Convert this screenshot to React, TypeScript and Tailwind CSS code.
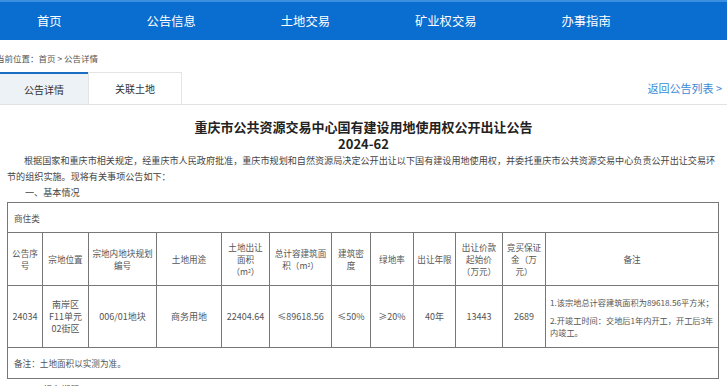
import React from "react";

const navItems = ["首页", "公告信息", "土地交易", "矿业权交易", "办事指南"];

// column widths in px, taken from the table grid
const colWidths = [35, 46, 68, 65, 48, 62, 39, 43, 42, 47, 43, 173];

const headers: React.ReactNode[] = [
    <>公告序<br />号</>,
    "宗地位置",
    <>宗地内地块规划<br />编号</>,
    "土地用途",
    <>土地出让<br />面积<br />（m<sup className="text-[5px]">2</sup>）</>,
    <>总计容建筑面<br />积（m<sup className="text-[5px]">2</sup>）</>,
    <>建筑密<br />度</>,
    "绿地率",
    "出让年限",
    <>出让价款<br />起始价<br />（万元）</>,
    <>竞买保证<br />金（万<br />元）</>,
    "备注",
];

const values: React.ReactNode[] = [
    "24034",
    <>南岸区<br />F11单元<br />02街区</>,
    "006/01地块",
    "商务用地",
    "22404.64",
    "≤89618.56",
    "≤50%",
    "≥20%",
    "40年",
    "13443",
    "2689",
];

export default function App() {
    return (
        <div
            className="w-[727px] h-[386px] overflow-hidden bg-white text-[#333]"
            style={{fontFamily: '"Noto Sans CJK SC", "Noto Sans", sans-serif'}}
        >
            {/* NAV */}
            <div className="h-[40px] bg-[#0a6dd0] border-t-[2px] border-[#3b8fe0] flex items-center pl-[37px] gap-[85px]">
                {navItems.map((item) => (
                    <span key={item} className="text-white text-[12.3px] leading-none">{item}</span>
                ))}
            </div>

            {/* breadcrumb */}
            <div className="h-[32px] flex items-center pt-[4px] ml-[-4px] text-[8.5px] text-[#555]">
                当前位置：首页 &gt; 公告详情
            </div>

            {/* tabs */}
            <div className="h-[33px] flex items-stretch border-b border-[#e2e2e2]">
                <div className="w-[88px] bg-[#edf2f7] border-t-[2px] border-[#1a6fc4] flex items-center justify-center text-[10px] text-[#333]">
                    公告详情
                </div>
                <div className="w-[94px] bg-white border border-b-0 border-[#e4e4e4] flex items-center justify-center text-[10px] text-[#333]">
                    关联土地
                </div>
                <div className="flex-1 flex items-center justify-end pr-[5px] text-[11px] text-[#3a8ad8]">
                    返回公告列表 &gt;
                </div>
            </div>

            {/* title */}
            <div className="mt-[13px] text-center font-bold text-[13px] leading-[17px] text-[#222]">
                重庆市公共资源交易中心国有建设用地使用权公开出让公告
            </div>
            <div className="text-center font-bold text-[13px] leading-[17px] text-[#222]">2024-62</div>

            {/* intro */}
            <p className="pl-[7px] text-[9.1px] leading-[16px] text-[#444] whitespace-nowrap">
                <span className="pl-[17px]">根据国家和重庆市相关规定，经重庆市人民政府批准，重庆市规划和自然资源局决定公开出让以下国有建设用地使用权，并委托重庆市公共资源交易中心负责公开出让交易环</span>
                <br />
                节的组织实施。现将有关事项公告如下：
            </p>
            <div className="pl-[25px] text-[9.1px] leading-[16px] text-[#444]">一、基本情况</div>

            {/* table */}
            <table className="mt-[2px] ml-[7px] w-[711px] table-fixed border-collapse border border-[#777] text-[8.6px] leading-[12px] text-[#555]">
                <colgroup>
                    {colWidths.map((w, i) => (
                        <col key={i} style={{width: w}} />
                    ))}
                </colgroup>
                <tbody>
                    <tr className="h-[30px]">
                        <td colSpan={12} className="border border-[#777] px-[6px] text-left">商住类</td>
                    </tr>
                    <tr className="h-[53px]">
                        {headers.map((h, i) => (
                            <td key={i} className="border border-[#777] text-center align-middle px-0">{h}</td>
                        ))}
                    </tr>
                    <tr className="h-[62px]">
                        {values.map((v, i) => (
                            <td key={i} className="border border-[#777] text-center align-middle px-0 text-[9px]">{v}</td>
                        ))}
                        <td className="border border-[#777] text-left align-middle px-[4px] text-[8.2px] whitespace-nowrap">
                            <p>1.该宗地总计容建筑面积为89618.56平方米；</p>
                            <p className="mt-[6px]">2.开竣工时间：交地后1年内开工，开工后3年<br />内竣工。</p>
                        </td>
                    </tr>
                    <tr className="h-[31px]">
                        <td colSpan={12} className="border border-[#777] px-[6px] text-left">备注：土地面积以实测为准。</td>
                    </tr>
                </tbody>
            </table>

            <div className="mt-[2px] pl-[25px] text-[9.1px] leading-[16px] text-[#444]">二、报名期限</div>
        </div>
    );
}
